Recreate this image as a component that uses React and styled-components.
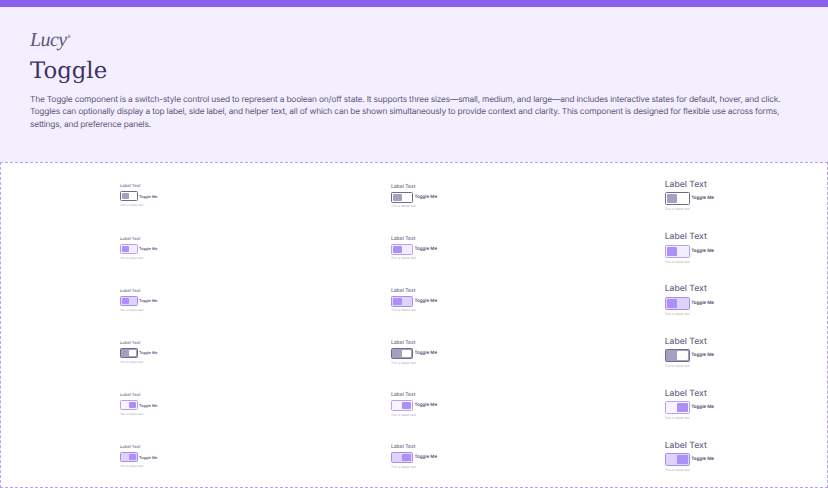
import styled, { createGlobalStyle } from "styled-components";

const GlobalStyle = createGlobalStyle`
  * { box-sizing: border-box; }
  html, body { margin: 0; padding: 0; background: #fff; }
  body {
    font-family: "Inter", "Open Sans", sans-serif;
    text-rendering: geometricPrecision;
  }
`;

const SIZES = {
  small: { label: 4.2, trackW: 18, trackH: 10, side: 3.7, sideWeight: 500, helper: 2.8, gap: 1, labelGap: 2, helperGap: 3 },
  medium: { label: 5, trackW: 22, trackH: 11, side: 4.5, sideWeight: 500, helper: 3, gap: 1.5, labelGap: 2, helperGap: 2.5 },
  large: { label: 8.6, trackW: 25, trackH: 13, side: 4.5, sideWeight: 600, helper: 3, gap: 1.5, labelGap: 2, helperGap: 3 },
};

const STATES = {
  off: { border: "#6f6892", track: "#ffffff", thumb: "#a5a0bd", on: false },
  offHover: { border: "#b9a0f6", track: "#f2edff", thumb: "#ac90f5", on: false },
  offClick: { border: "#a98cf2", track: "#dfd3fc", thumb: "#ac90f5", on: false },
  on: { border: "#6f6892", track: "#a5a0bd", thumb: "#ffffff", on: true },
  onHover: { border: "#b9a0f6", track: "#f7f3ff", thumb: "#ac90f5", on: true },
  onClick: { border: "#a98cf2", track: "#dfd3fc", thumb: "#ac90f5", on: true },
};

const STATE_ORDER = ["off", "offHover", "offClick", "on", "onHover", "onClick"];
const SIZE_ORDER = ["small", "medium", "large"];

const TopBar = styled.div`
  height: 7px;
  background: #8b60ec;
`;

const Header = styled.header`
  height: 155px;
  background: #f3efff;
  padding: 21px 30px 0;
`;

const Logo = styled.div`
  font-family: "Liberation Serif", serif;
  font-style: italic;
  font-size: 20px;
  line-height: 20px;
  color: #5d5678;
  letter-spacing: -0.6px;

  sup {
    font-size: 5px;
    font-style: normal;
    margin-left: 1px;
  }
`;

const Title = styled.h1`
  margin: 5px 0 0;
  font-family: "DejaVu Serif", serif;
  font-weight: 400;
  font-size: 22.8px;
  line-height: 32px;
  color: #3d3263;
`;

const Description = styled.p`
  margin: 7px 0 0;
  font-size: 8.4px;
  line-height: 12.6px;
  letter-spacing: -0.2px;
  color: #5d5678;
`;

const Panel = styled.main`
  height: 326px;
  border: 1px dashed #b9a0f6;
  padding: 7px 0 4px;
  display: grid;
  grid-template-columns: repeat(3, 1fr);
  grid-template-rows: repeat(6, 1fr);
  grid-auto-flow: column;
  justify-items: center;
  align-items: center;
`;

const Field = styled.div`
  display: flex;
  flex-direction: column;
  align-items: flex-start;
`;

const TopLabel = styled.span`
  font-size: ${(p) => SIZES[p.$size].label}px;
  line-height: 1.2;
  color: #6d6785;
  margin-bottom: ${(p) => SIZES[p.$size].labelGap}px;
  font-weight: 500;
`;

const Row = styled.div`
  display: flex;
  align-items: center;
  gap: ${(p) => SIZES[p.$size].gap}px;
`;

const Track = styled.div`
  width: ${(p) => SIZES[p.$size].trackW}px;
  height: ${(p) => SIZES[p.$size].trackH}px;
  border: 1px solid ${(p) => STATES[p.$state].border};
  background: ${(p) => STATES[p.$state].track};
  border-radius: 1.5px;
  display: flex;
  padding: 1px;
  justify-content: ${(p) => (STATES[p.$state].on ? "flex-end" : "flex-start")};
`;

const Thumb = styled.div`
  width: 50%;
  height: 100%;
  border-radius: 1px;
  background: ${(p) => STATES[p.$state].thumb};
`;

const SideLabel = styled.span`
  font-size: ${(p) => SIZES[p.$size].side}px;
  font-weight: ${(p) => SIZES[p.$size].sideWeight};
  color: #4b4468;
  white-space: nowrap;
`;

const Helper = styled.span`
  font-size: ${(p) => SIZES[p.$size].helper}px;
  line-height: 1.2;
  color: #a9a5bb;
  margin-top: ${(p) => SIZES[p.$size].helperGap}px;
`;

const Toggle = ({ size, state }) => (
  <Field>
    <TopLabel $size={size}>Label Text</TopLabel>
    <Row $size={size}>
      <Track $size={size} $state={state}>
        <Thumb $state={state} />
      </Track>
      <SideLabel $size={size}>Toggle Me</SideLabel>
    </Row>
    <Helper $size={size}>This is helper text</Helper>
  </Field>
);

export default function App() {
  return (
    <>
      <GlobalStyle />
      <TopBar />
      <Header>
        <Logo>
          Lucy<sup>R</sup>
        </Logo>
        <Title>Toggle</Title>
        <Description>
          The Toggle component is a switch-style control used to represent a boolean on/off state. It supports three
          sizes—small, medium, and large—and includes interactive states for default, hover, and click. Toggles can
          optionally display a top label, side label, and helper text, all of which can be shown simultaneously to
          provide context and clarity. This component is designed for flexible use across forms, settings, and
          preference panels.
        </Description>
      </Header>
      <Panel>
        {SIZE_ORDER.map((size) =>
          STATE_ORDER.map((state) => <Toggle key={size + state} size={size} state={state} />)
        )}
      </Panel>
    </>
  );
}
